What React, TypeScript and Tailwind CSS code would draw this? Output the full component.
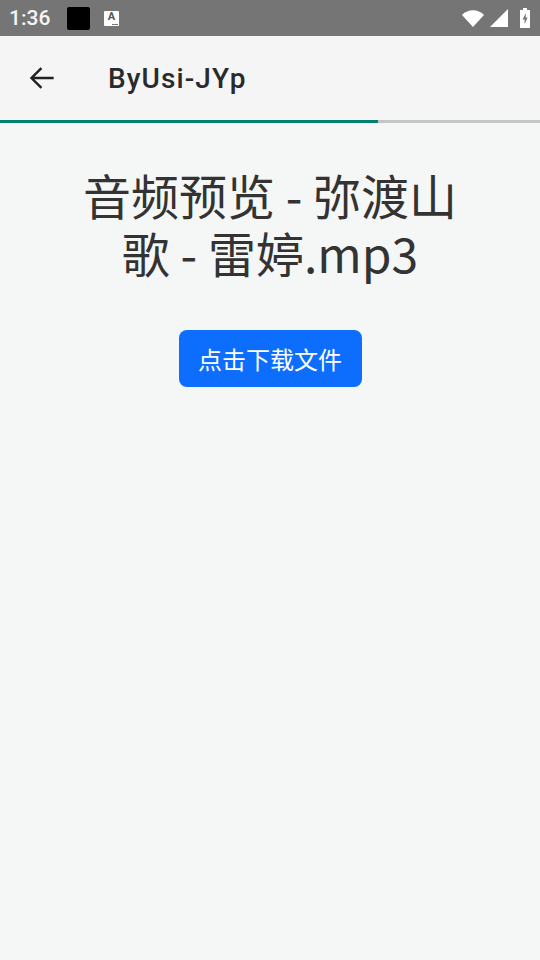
const CJK = '[font-family:"Noto_Sans_CJK_SC",sans-serif]';

function StatusBar() {
  return (
    <div className="flex h-9 items-center bg-[#757575] pl-[9px] pr-[9px] text-white">
      <span className="w-[42px] font-['Roboto',sans-serif] text-[21px] font-medium leading-none text-[#f5f5f5]">1:36</span>
      <div className="ml-[16px] h-[23px] w-[23px] rounded-[2px] bg-black" />
      <div className="relative ml-[14px] flex h-[15px] w-[15px] items-start justify-center rounded-[1px] bg-white">
        <span className="font-['Roboto',sans-serif] text-[11px] font-bold leading-[12px] text-[#555]">A</span>
        <span className="absolute bottom-[1px] right-[1px] h-[1px] w-[6px] bg-[#777]" />
      </div>
      <div className="ml-auto flex items-center">
        <svg width="22" height="17" viewBox="0 0 22 17" className="mr-[3px]">
          <path d="M0 5 C6 -1.2 16 -1.2 22 5 L11 17 Z" fill="#fff" />
        </svg>
        <svg width="18" height="18" viewBox="0 0 18 18" className="ml-[3px]">
          <path d="M0 18 L18 0 V18 Z" fill="#fff" />
        </svg>
        <svg width="12" height="20" viewBox="0 0 12 20" className="ml-[11px]">
          <path fillRule="evenodd" d="M4 0 H8 V2 H11 V20 H1 V2 H4 Z M6.8 5 L3.6 11.5 H5.6 V16 L8.6 9.5 H6.6 Z" fill="#fff" />
        </svg>
      </div>
    </div>
  );
}

export default function App() {
  return (
    <div className="flex h-[960px] w-[540px] flex-col overflow-hidden bg-[#f5f7f6]">
      <StatusBar />
      <div className="flex h-[84px] items-center bg-[#f5f5f5]">
        <svg width="28" height="28" viewBox="0 0 24 24" className="ml-[28px]" fill="none" stroke="#212121" strokeWidth="2.1">
          <path d="M22 12 H3.5 M11.5 3.5 L3 12 L11.5 20.5" />
        </svg>
        <span className="ml-[52px] pt-[2px] font-['Roboto',sans-serif] text-[28px] font-medium leading-none tracking-[1.1px] text-[#2a2a2a]">ByUsi-JYp</span>
      </div>
      <div className="flex h-[3px] bg-[#c4c6c5]">
        <div className="h-full w-[378px] bg-[#00806e]" />
      </div>
      <div className="flex flex-col items-center">
        <h1 className={`mt-[42px] w-[400px] text-center text-[48px] font-normal leading-[58px] text-[#333333] ${CJK}`}>
          音频预览 - 弥渡山歌 - 雷婷.mp3
        </h1>
        <button className={`mt-[49px] flex h-[57px] w-[183px] items-center justify-center rounded-[8px] bg-[#0d6efd] text-[24px] leading-none text-white ${CJK}`}>
          点击下载文件
        </button>
      </div>
    </div>
  );
}
